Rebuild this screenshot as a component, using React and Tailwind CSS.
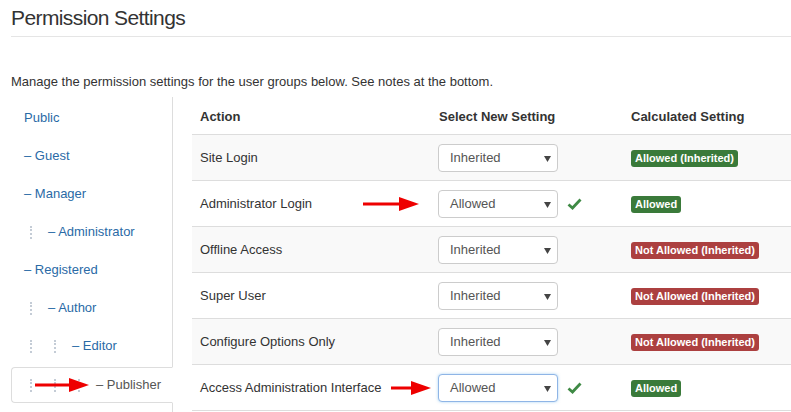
import React from 'react'

const groups = [
  { name: 'Public', level: 0, dash: false },
  { name: 'Guest', level: 0, dash: true },
  { name: 'Manager', level: 0, dash: true },
  { name: 'Administrator', level: 1, dash: true },
  { name: 'Registered', level: 0, dash: true },
  { name: 'Author', level: 1, dash: true },
  { name: 'Editor', level: 2, dash: true },
  { name: 'Publisher', level: 3, dash: true, active: true },
]

const rows = [
  { action: 'Site Login', setting: 'Inherited', calc: 'Allowed (Inherited)', ok: true },
  { action: 'Administrator Login', setting: 'Allowed', calc: 'Allowed', ok: true, check: true, arrow: 'row' },
  { action: 'Offline Access', setting: 'Inherited', calc: 'Not Allowed (Inherited)', ok: false },
  { action: 'Super User', setting: 'Inherited', calc: 'Not Allowed (Inherited)', ok: false },
  { action: 'Configure Options Only', setting: 'Inherited', calc: 'Not Allowed (Inherited)', ok: false },
  { action: 'Access Administration Interface', setting: 'Allowed', calc: 'Allowed', ok: true, check: true, arrow: 'last', focus: true },
]

const RedArrow = ({ className, width }) => (
  <svg className={className} width={width} height="16" viewBox={`0 0 ${width} 16`}>
    <rect x="0" y="6.5" width={width - 18} height="3" fill="#ee0000" />
    <polygon points={`${width - 20},1 ${width},8 ${width - 20},15`} fill="#ee0000" />
  </svg>
)

const Check = () => (
  <svg width="15" height="12" viewBox="0 0 15 12" className="ml-[9px]">
    <path d="M1.5 6.5 L5.5 10 L13.5 1.5" fill="none" stroke="#3f8a45" strokeWidth="2.8" strokeLinejoin="miter" />
  </svg>
)

const Level = () => (
  <span className="inline-block w-[24px] h-[13px] align-middle">
    <span className="block ml-[6px] h-full border-l-2 border-dotted border-[#c4ccd6]" />
  </span>
)

const App = () => {
  return (
    <div className="w-[791px] h-[412px] overflow-hidden bg-white text-[#333] font-['Liberation_Sans',Arial,sans-serif] text-[13px]">
      <div className="pl-[11px]">
        <h1 className="text-[21px] tracking-[-0.6px] leading-[24px] pt-[6px] pb-[6px] font-normal border-b border-[#e5e5e5]">Permission Settings</h1>
        <p className="mt-[36px] leading-[18px]">Manage the permission settings for the user groups below. See notes at the bottom.</p>
      </div>

      <div className="flex mt-[6px] pl-[11px]">
        <ul className="w-[162px] shrink-0 border-r border-[#ddd] pt-[2px] h-[320px]">
          {groups.map((g) => (
            <li
              key={g.name}
              className={
                g.active
                  ? 'relative h-[36px] mt-[2px] -mr-px flex items-center pl-[12px] bg-white border border-[#ddd] border-r-white rounded-l-[4px] text-[#555]'
                  : 'h-[38px] flex items-center pl-[13px] text-[#2a6aa6]'
              }
            >
              {Array.from({ length: g.level }).map((_, i) => (
                <Level key={i} />
              ))}
              <span>{g.dash ? '– ' : ''}{g.name}</span>
              {g.active && <RedArrow className="absolute left-[23px] top-[9px]" width={54} />}
            </li>
          ))}
        </ul>

        <div className="ml-[19px] mt-[2px] flex-1">
          <div className="flex h-[36px] items-center font-bold border-b border-[#ddd]">
            <div className="w-[238px] pl-[8px]">Action</div>
            <div className="w-[193px] pl-[9px]">Select New Setting</div>
            <div className="pl-[8px]">Calculated Setting</div>
          </div>
          {rows.map((r, i) => (
            <div
              key={r.action}
              className={`relative flex h-[46px] items-center border-b border-[#ddd] ${i % 2 === 0 ? 'bg-[#f9f9f9]' : 'bg-white'}`}
            >
              <div className="w-[238px] pl-[8px]">{r.action}</div>
              <div className="w-[193px] pl-[8px] flex items-center">
                <div
                  className={`relative w-[120px] h-[28px] rounded-[4px] bg-white flex items-center pl-[11px] text-[#555] border ${
                    r.focus ? 'border-[#8fb5e6] shadow-[0_0_3px_rgba(82,168,236,0.5)]' : 'border-[#ccc]'
                  }`}
                >
                  {r.setting}
                  <svg className="absolute right-[6px] top-[11px]" width="7" height="6" viewBox="0 0 7 6">
                    <polygon points="0,0 7,0 3.5,6" fill="#444" />
                  </svg>
                </div>
                {r.check && <Check />}
              </div>
              <div className="pl-[8px]">
                <span
                  className={`inline-block px-[4px] leading-[17px] rounded-[3px] text-white font-bold text-[11px] ${
                    r.ok ? 'bg-[#3a7a3a]' : 'bg-[#ac4040]'
                  }`}
                >
                  {r.calc}
                </span>
              </div>
              {r.arrow === 'row' && <RedArrow className="absolute left-[171px] top-[15px]" width={56} />}
              {r.arrow === 'last' && <RedArrow className="absolute left-[199px] top-[15px]" width={40} />}
            </div>
          ))}
        </div>
      </div>
    </div>
  )
}

export default App
